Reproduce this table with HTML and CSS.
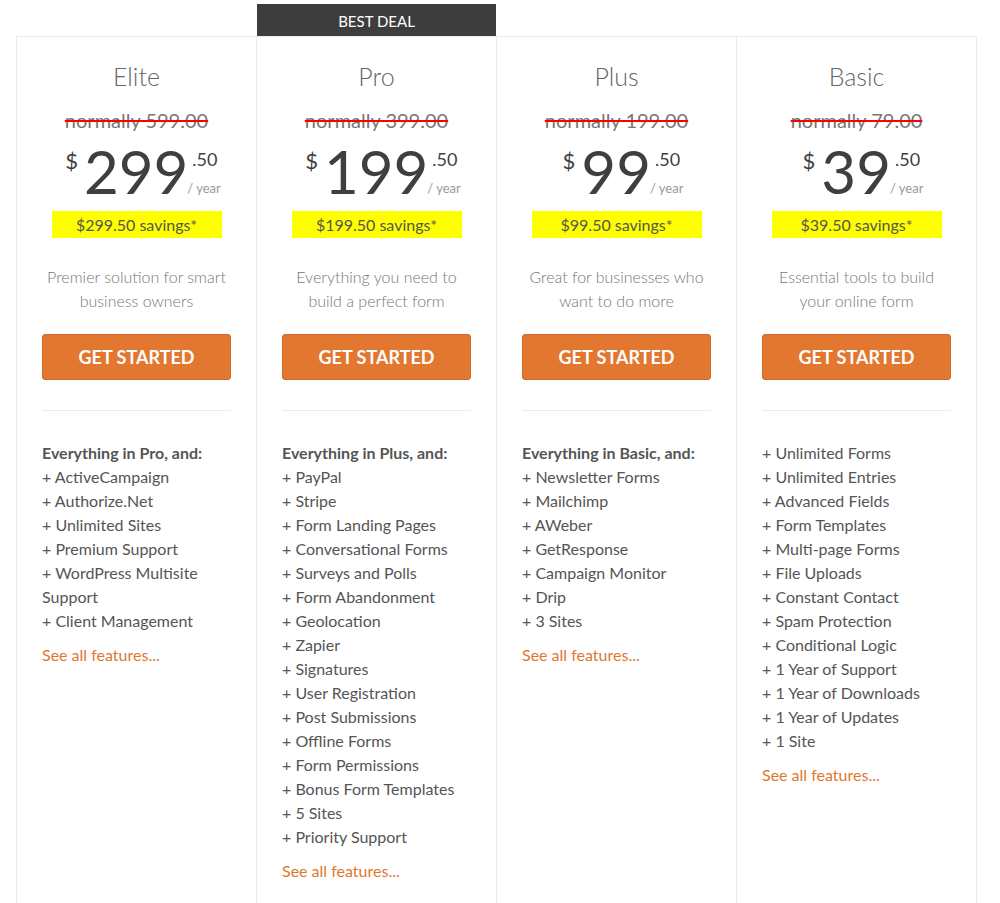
FILE: index.html
```html
<!DOCTYPE html>
<html>
<head>
<meta charset="utf-8">
<link rel="stylesheet" href="styles.css">
</head>
<body>
<div class="plans">
  <div class="plan">
    <h2 class="name">Elite</h2>
    <div class="was">normally 599.00</div>
    <div class="price"><span class="cur">$</span><span class="amount">299</span><span class="side"><span class="cents">.50</span><span class="per">/ year</span></span></div>
    <div class="save">$299.50 savings*</div>
    <p class="desc">Premier solution for smart business owners</p>
    <a class="btn">GET STARTED</a>
    <hr class="rule">
    <ul class="feats">
      <li class="head">Everything in Pro, and:</li>
      <li>+ ActiveCampaign</li>
      <li>+ Authorize.Net</li>
      <li>+ Unlimited Sites</li>
      <li>+ Premium Support</li>
      <li>+ WordPress Multisite Support</li>
      <li>+ Client Management</li>
    </ul>
    <a class="more">See all features...</a>
  </div>
  <div class="plan featured">
    <div class="badge">BEST DEAL</div>
    <h2 class="name">Pro</h2>
    <div class="was">normally 399.00</div>
    <div class="price"><span class="cur">$</span><span class="amount">199</span><span class="side"><span class="cents">.50</span><span class="per">/ year</span></span></div>
    <div class="save">$199.50 savings*</div>
    <p class="desc">Everything you need to build a perfect form</p>
    <a class="btn">GET STARTED</a>
    <hr class="rule">
    <ul class="feats">
      <li class="head">Everything in Plus, and:</li>
      <li>+ PayPal</li>
      <li>+ Stripe</li>
      <li>+ Form Landing Pages</li>
      <li>+ Conversational Forms</li>
      <li>+ Surveys and Polls</li>
      <li>+ Form Abandonment</li>
      <li>+ Geolocation</li>
      <li>+ Zapier</li>
      <li>+ Signatures</li>
      <li>+ User Registration</li>
      <li>+ Post Submissions</li>
      <li>+ Offline Forms</li>
      <li>+ Form Permissions</li>
      <li>+ Bonus Form Templates</li>
      <li>+ 5 Sites</li>
      <li>+ Priority Support</li>
    </ul>
    <a class="more">See all features...</a>
  </div>
  <div class="plan">
    <h2 class="name">Plus</h2>
    <div class="was">normally 199.00</div>
    <div class="price"><span class="cur">$</span><span class="amount">99</span><span class="side"><span class="cents">.50</span><span class="per">/ year</span></span></div>
    <div class="save">$99.50 savings*</div>
    <p class="desc">Great for businesses who want to do more</p>
    <a class="btn">GET STARTED</a>
    <hr class="rule">
    <ul class="feats">
      <li class="head">Everything in Basic, and:</li>
      <li>+ Newsletter Forms</li>
      <li>+ Mailchimp</li>
      <li>+ AWeber</li>
      <li>+ GetResponse</li>
      <li>+ Campaign Monitor</li>
      <li>+ Drip</li>
      <li>+ 3 Sites</li>
    </ul>
    <a class="more">See all features...</a>
  </div>
  <div class="plan">
    <h2 class="name">Basic</h2>
    <div class="was">normally 79.00</div>
    <div class="price"><span class="cur">$</span><span class="amount">39</span><span class="side"><span class="cents">.50</span><span class="per">/ year</span></span></div>
    <div class="save">$39.50 savings*</div>
    <p class="desc">Essential tools to build your online form</p>
    <a class="btn">GET STARTED</a>
    <hr class="rule">
    <ul class="feats">
      <li>+ Unlimited Forms</li>
      <li>+ Unlimited Entries</li>
      <li>+ Advanced Fields</li>
      <li>+ Form Templates</li>
      <li>+ Multi-page Forms</li>
      <li>+ File Uploads</li>
      <li>+ Constant Contact</li>
      <li>+ Spam Protection</li>
      <li>+ Conditional Logic</li>
      <li>+ 1 Year of Support</li>
      <li>+ 1 Year of Downloads</li>
      <li>+ 1 Year of Updates</li>
      <li>+ 1 Site</li>
    </ul>
    <a class="more">See all features...</a>
  </div>
</div>
</body>
</html>
```
FILE: styles.css
```css
html, body {
  margin: 0;
  padding: 0;
  background: #fff;
}
body {
  font-family: Lato, "Open Sans", "Liberation Sans", sans-serif;
  color: #555;
}
.plans {
  display: grid;
  grid-template-columns: 240px 240px 240px 241px;
  margin: 36px 0 0 16px;
  width: 961px;
}
.plan {
  position: relative;
  border-top: 1px solid #ebebeb;
  border-left: 1px solid #ebebeb;
  padding: 24px 25px 40px;
  min-height: 900px;
}
.plan:last-child {
  border-right: 1px solid #ebebeb;
}
.badge {
  position: absolute;
  top: -33px;
  left: 0;
  right: 0;
  height: 32px;
  background: #3d3d3d;
  color: #fff;
  font-size: 15px;
  line-height: 34px;
  text-align: center;
}
.name {
  margin: 0;
  font-size: 25px;
  font-weight: 300;
  line-height: 31px;
  color: #666;
  text-align: center;
}
.was {
  margin-top: 16px;
  font-size: 20px;
  line-height: 24px;
  color: #777;
  text-align: center;
  text-decoration: line-through;
  text-decoration-color: #ff0000;
  text-decoration-thickness: 2px;
}
.price {
  margin-top: 9px;
  padding-left: 13px;
  display: flex;
  justify-content: center;
  height: 60px;
  color: #3f3f3f;
}
.cur {
  margin-top: 9px;
  font-size: 22px;
  line-height: 1;
  margin-right: 6px;
}
.amount {
  font-size: 60px;
  line-height: 60px;
}
.side {
  display: flex;
  flex-direction: column;
  justify-content: space-between;
  align-items: flex-start;
  margin-left: -1px;
}
.cents {
  margin-top: 9px;
  margin-left: 5px;
  font-size: 18px;
  line-height: 1;
}
.per {
  margin-bottom: 6px;
  font-size: 13px;
  line-height: 1;
  color: #999;
}
.save {
  margin: 10px auto 0;
  width: 170px;
  height: 27px;
  background: #ffff00;
  font-size: 16px;
  line-height: 27px;
  color: #555;
  text-align: center;
}
.desc {
  margin: 27px 0 0;
  font-size: 16px;
  font-weight: 300;
  line-height: 24px;
  color: #777;
  text-align: center;
}
.btn {
  display: block;
  margin-top: 21px;
  height: 44px;
  background: #e27730;
  border: 1px solid #d0692a;
  border-radius: 3px;
  color: #fff;
  font-size: 18px;
  font-weight: 700;
  line-height: 44px;
  text-align: center;
}
.rule {
  margin: 30px 0 0;
  border: 0;
  border-top: 1px solid #ebebeb;
  height: 0;
}
.feats {
  list-style: none;
  margin: 30px 0 0;
  padding: 0;
  font-size: 16px;
  line-height: 24px;
  color: #555;
}
.feats .head {
  font-weight: 700;
}
.more {
  display: block;
  margin-top: 10px;
  font-size: 16px;
  line-height: 24px;
  color: #e27730;
}
```
